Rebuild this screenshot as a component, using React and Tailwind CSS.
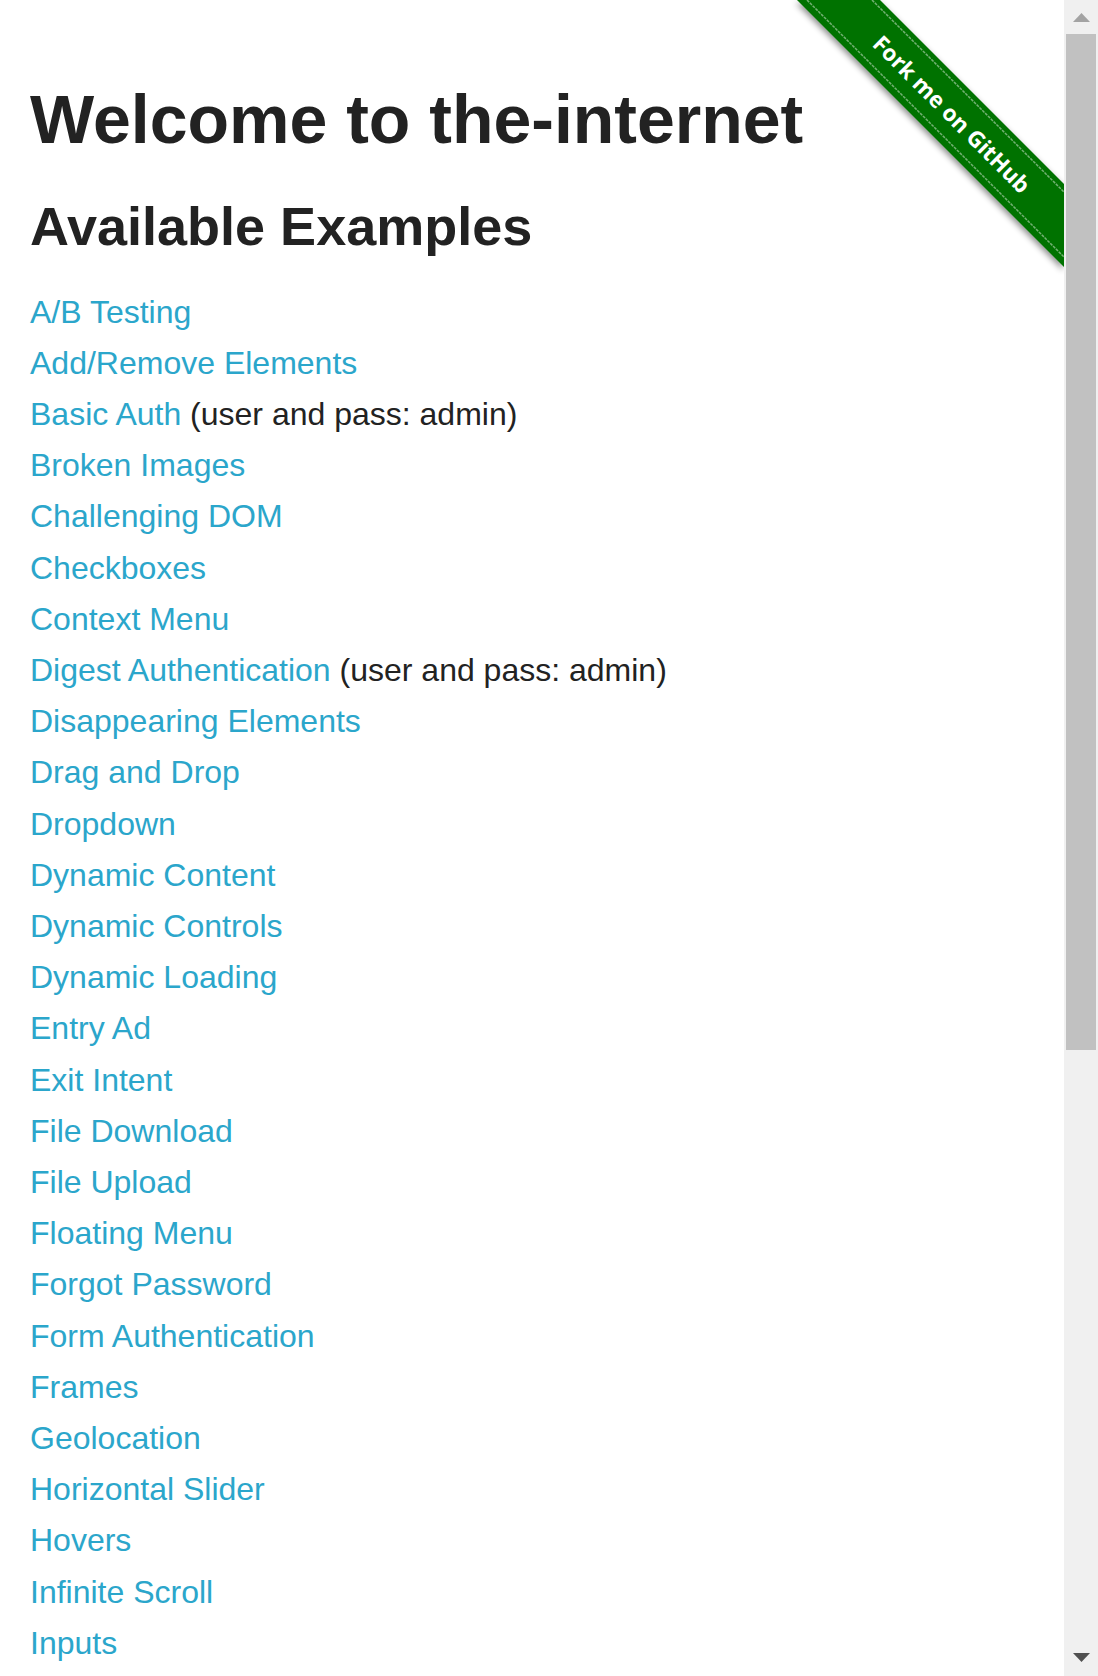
import React from 'react';

const examples = [
  { name: 'A/B Testing' },
  { name: 'Add/Remove Elements' },
  { name: 'Basic Auth', note: '(user and pass: admin)' },
  { name: 'Broken Images' },
  { name: 'Challenging DOM' },
  { name: 'Checkboxes' },
  { name: 'Context Menu' },
  { name: 'Digest Authentication', note: '(user and pass: admin)' },
  { name: 'Disappearing Elements' },
  { name: 'Drag and Drop' },
  { name: 'Dropdown' },
  { name: 'Dynamic Content' },
  { name: 'Dynamic Controls' },
  { name: 'Dynamic Loading' },
  { name: 'Entry Ad' },
  { name: 'Exit Intent' },
  { name: 'File Download' },
  { name: 'File Upload' },
  { name: 'Floating Menu' },
  { name: 'Forgot Password' },
  { name: 'Form Authentication' },
  { name: 'Frames' },
  { name: 'Geolocation' },
  { name: 'Horizontal Slider' },
  { name: 'Hovers' },
  { name: 'Infinite Scroll' },
  { name: 'Inputs' },
];

const ForkRibbon = () => (
  <a href="#" className="absolute top-0 right-0 block w-[298px] h-[298px]">
    <svg width="298" height="298" viewBox="0 0 298 298">
      <defs>
        <filter id="ribbonShadow" x="-20%" y="-20%" width="140%" height="140%">
          <feDropShadow dx="-1" dy="3" stdDeviation="3" floodColor="#000" floodOpacity="0.45" />
        </filter>
      </defs>
      <polygon points="31,0 114,0 298,184 298,267" fill="#007200" filter="url(#ribbonShadow)" />
      <line x1="41" y1="0" x2="298" y2="257" stroke="#ffffff" strokeOpacity="0.45" strokeWidth="1.5" strokeDasharray="3 1" />
      <line x1="106" y1="0" x2="298" y2="192" stroke="#ffffff" strokeOpacity="0.45" strokeWidth="1.5" strokeDasharray="3 1" />
      <g transform="translate(186 114) rotate(45)">
        <text
          x="0"
          y="0"
          textAnchor="middle"
          dominantBaseline="central"
          fill="#ffffff"
          fontFamily="'Open Sans', 'DejaVu Sans', sans-serif"
          fontWeight="700"
          fontSize="22.5"
        >
          Fork me on GitHub
        </text>
      </g>
    </svg>
  </a>
);

const ScrollBar = () => (
  <div className="w-[34px] h-full shrink-0 bg-[#f0f0f0] flex flex-col">
    <div className="h-[34px] flex items-start justify-center pt-[13px]">
      <svg width="17" height="9" viewBox="0 0 17 9">
        <polygon points="8.5,0 17,9 0,9" fill="#a3a3a3" />
      </svg>
    </div>
    <div className="h-[1016px] mx-[2px] bg-[#c1c1c1]" />
    <div className="flex-1" />
    <div className="h-[34px] flex items-start justify-center pt-[11px]">
      <svg width="17" height="9" viewBox="0 0 17 9">
        <polygon points="0,0 17,0 8.5,9" fill="#505050" />
      </svg>
    </div>
  </div>
);

export default function App() {
  return (
    <div className="flex h-[1676px] w-full overflow-hidden bg-white font-['Liberation_Sans',Arial,sans-serif] text-[#222222]">
      <div className="relative flex-1 h-full overflow-hidden pl-[30px] pt-[77px]">
        <h1 className="text-[68px] leading-[85px] font-bold">Welcome to the-internet</h1>
        <h2 className="mt-[30.5px] text-[54px] leading-[67.5px] font-bold">Available Examples</h2>
        <ul className="mt-[26.6px] text-[32px] leading-[51.2px]">
          {examples.map((ex) => (
            <li key={ex.name}>
              <a href="#" className="text-[#2ba6cb]">{ex.name}</a>
              {ex.note && <span> {ex.note}</span>}
            </li>
          ))}
        </ul>
        <ForkRibbon />
      </div>
      <ScrollBar />
    </div>
  );
}
